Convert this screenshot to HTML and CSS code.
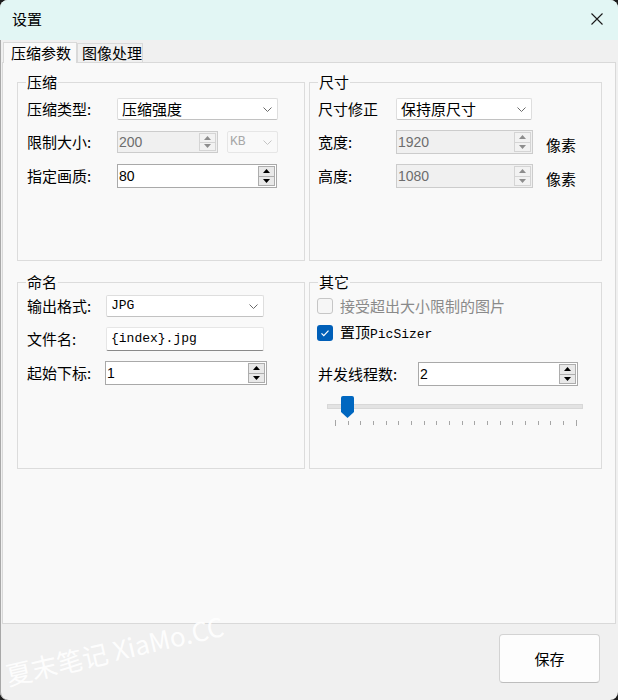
FILE: index.html
```html
<!DOCTYPE html>
<html lang="zh-CN">
<head>
<meta charset="utf-8">
<title>设置</title>
<link rel="stylesheet" href="styles.css">
</head>
<body>
<div class="window">
  <div class="titlebar">
    <span class="title">设置</span>
    <svg class="close" width="12" height="12" viewBox="0 0 12 12"><path d="M0.5 0.5L11.5 11.5M11.5 0.5L0.5 11.5" stroke="#1a1a1a" stroke-width="1.1" fill="none"/></svg>
  </div>
  <div class="tabs">
    <div class="tab active">压缩参数</div>
    <div class="tab">图像处理</div>
  </div>
  <div class="page">
    <fieldset class="group g1">
      <legend>压缩</legend>
      <div class="rows">
        <div class="row h22">
          <span class="lbl w90">压缩类型:</span>
          <div class="combo w161"><span>压缩强度</span><svg class="chev" width="9" height="5" viewBox="0 0 9 5"><path d="M0.5 0.5L4.5 4.5L8.5 0.5" fill="none" stroke="#6a6a6a"/></svg></div>
        </div>
        <div class="row h22">
          <span class="lbl w90">限制大小:</span>
          <div class="spin disabled w101"><span class="num">200</span>
            <div class="sbtns"><div class="sb"><svg width="7" height="4" viewBox="0 0 7 4"><path d="M0 4L3.5 0L7 4Z"/></svg></div><div class="sb"><svg width="7" height="4" viewBox="0 0 7 4"><path d="M0 0L3.5 4L7 0Z"/></svg></div></div>
          </div>
          <div class="combo disabled w51 ml9"><span class="mono">KB</span><svg class="chev" width="9" height="5" viewBox="0 0 9 5"><path d="M0.5 0.5L4.5 4.5L8.5 0.5" fill="none" stroke="#c4c4c4"/></svg></div>
        </div>
        <div class="row h24">
          <span class="lbl w90">指定画质:</span>
          <div class="spin w160"><span class="num">80</span>
            <div class="sbtns"><div class="sb"><svg width="7" height="4" viewBox="0 0 7 4"><path d="M0 4L3.5 0L7 4Z"/></svg></div><div class="sb"><svg width="7" height="4" viewBox="0 0 7 4"><path d="M0 0L3.5 4L7 0Z"/></svg></div></div>
          </div>
        </div>
      </div>
    </fieldset>

    <fieldset class="group g2">
      <legend>尺寸</legend>
      <div class="rows">
        <div class="row h22">
          <span class="lbl w78">尺寸修正</span>
          <div class="combo w136"><span>保持原尺寸</span><svg class="chev" width="9" height="5" viewBox="0 0 9 5"><path d="M0.5 0.5L4.5 4.5L8.5 0.5" fill="none" stroke="#6a6a6a"/></svg></div>
        </div>
        <div class="row h24">
          <span class="lbl w78">宽度:</span>
          <div class="spin disabled w137"><span class="num">1920</span>
            <div class="sbtns"><div class="sb"><svg width="7" height="4" viewBox="0 0 7 4"><path d="M0 4L3.5 0L7 4Z"/></svg></div><div class="sb"><svg width="7" height="4" viewBox="0 0 7 4"><path d="M0 0L3.5 4L7 0Z"/></svg></div></div>
          </div>
          <span class="unit">像素</span>
        </div>
        <div class="row h24">
          <span class="lbl w78">高度:</span>
          <div class="spin disabled w137"><span class="num">1080</span>
            <div class="sbtns"><div class="sb"><svg width="7" height="4" viewBox="0 0 7 4"><path d="M0 4L3.5 0L7 4Z"/></svg></div><div class="sb"><svg width="7" height="4" viewBox="0 0 7 4"><path d="M0 0L3.5 4L7 0Z"/></svg></div></div>
          </div>
          <span class="unit">像素</span>
        </div>
      </div>
    </fieldset>

    <fieldset class="group g3">
      <legend>命名</legend>
      <div class="rows">
        <div class="row h22">
          <span class="lbl w79">输出格式:</span>
          <div class="combo w158"><span class="mono">JPG</span><svg class="chev" width="9" height="5" viewBox="0 0 9 5"><path d="M0.5 0.5L4.5 4.5L8.5 0.5" fill="none" stroke="#6a6a6a"/></svg></div>
        </div>
        <div class="row h24">
          <span class="lbl w79">文件名:</span>
          <div class="textbox w158"><span class="mono">{index}.jpg</span></div>
        </div>
        <div class="row h24">
          <span class="lbl w78">起始下标:</span>
          <div class="spin w162"><span class="num">1</span>
            <div class="sbtns"><div class="sb"><svg width="7" height="4" viewBox="0 0 7 4"><path d="M0 4L3.5 0L7 4Z"/></svg></div><div class="sb"><svg width="7" height="4" viewBox="0 0 7 4"><path d="M0 0L3.5 4L7 0Z"/></svg></div></div>
          </div>
        </div>
      </div>
    </fieldset>

    <fieldset class="group g4">
      <legend>其它</legend>
      <div class="rows4">
        <div class="check disabled"><span class="box"></span><span class="clabel">接受超出大小限制的图片</span></div>
        <div class="check on"><span class="box"><svg width="16" height="16" viewBox="0 0 16 16"><path d="M4.5 8.3L6.8 10.6L11.5 5.6" fill="none" stroke="#fff" stroke-width="1.2"/></svg></span><span class="clabel">置顶<span class="mono">PicSizer</span></span></div>
        <div class="row h24 threads">
          <span class="lbl w100">并发线程数:</span>
          <div class="spin w160"><span class="num">2</span>
            <div class="sbtns"><div class="sb"><svg width="7" height="4" viewBox="0 0 7 4"><path d="M0 4L3.5 0L7 4Z"/></svg></div><div class="sb"><svg width="7" height="4" viewBox="0 0 7 4"><path d="M0 0L3.5 4L7 0Z"/></svg></div></div>
          </div>
        </div>
        <div class="slider">
          <div class="track"></div>
          <svg class="thumb" width="13" height="22" viewBox="0 0 13 22"><path d="M2 0H11Q13 0 13 2V16L6.5 22L0 16V2Q0 0 2 0Z" fill="#0067c0"/></svg>
          <div class="ticks">
            <i class="long"></i><i></i><i></i><i></i><i></i><i></i><i></i><i></i><i></i><i></i><i></i><i></i><i></i><i></i><i></i><i></i><i></i><i></i><i></i><i class="long"></i>
          </div>
        </div>
      </div>
    </fieldset>
  </div>
  <div class="footer">
    <button class="save">保存</button>
  </div>
  <div class="watermark">夏末笔记 XiaMo.CC</div>
</div>
</body>
</html>
```

FILE: styles.css
```css
* { box-sizing: border-box; }
html, body { margin: 0; padding: 0; }
body {
  width: 618px;
  height: 700px;
  overflow: hidden;
  background: #1c1c1c;
  font-family: "Noto Sans CJK SC", "Noto Sans", sans-serif;
  font-size: 15px;
  line-height: 16px;
  color: #000;
}
.window {
  width: 618px;
  height: 700px;
  background: #f0f0f0;
  border-radius: 8px;
  overflow: hidden;
  display: flex;
  flex-direction: column;
  position: relative;
  box-shadow: inset 1px 0 0 #a8a8a8;
}
.titlebar {
  height: 40px;
  flex: none;
  background: #e2f6f4;
  display: flex;
  align-items: center;
  justify-content: space-between;
  padding: 0 15px 0 12px;
}
.title { padding-bottom: 2px; }
.close { display: block; margin-top: -2px; }

.tabs {
  height: 22px;
  flex: none;
  display: flex;
  align-items: flex-end;
  padding-left: 3px;
}
.tab {
  height: 19px;
  width: 66px;
  border: 1px solid #d9d9d9;
  border-bottom: none;
  background: #f0f0f0;
  padding-left: 4px;
  line-height: 17px;
  font-size: 15px;
}
.tab.active {
  position: relative;
  z-index: 1;
  width: 74px;
  height: 21px;
  margin-bottom: -1px;
  background: #f9f9f9;
  padding-left: 7px;
  line-height: 19px;
}

.page {
  flex: none;
  margin: 0 2px;
  height: 562px;
  background: #f9f9f9;
  border: 1px solid #d9d9d9;
  padding: 11px 0 0 14px;
  display: grid;
  grid-template-columns: 288px 293px;
  grid-template-rows: 187px 195px;
  column-gap: 4px;
  row-gap: 13px;
}
.group {
  margin: 0;
  padding: 0;
  min-width: 0;
  border: 1px solid #dcdcdc;
}
.group legend {
  margin-left: 8px;
  padding: 0 1px;
  line-height: 16px;
  font-size: 15px;
}
.g1 .rows { padding: 8px 0 0 9px; }
.g2 .rows { padding: 8px 0 0 8px; }
.g3 .rows { padding: 5px 0 0 9px; }
.rows { display: flex; flex-direction: column; gap: 10px; }
.g1 .rows { gap: 11px; }
.row { display: flex; align-items: center; }
.h22 { height: 22px; }
.h24 { height: 24px; }
.lbl { flex: none; white-space: nowrap; }
.w90 { width: 90px; }
.w78 { width: 78px; }
.w79 { width: 79px; }
.w100 { width: 100px; }
.w161 { width: 161px; }
.w160 { width: 160px; }
.w162 { width: 162px; }
.w101 { width: 101px; }
.w51 { width: 51px; }
.w136 { width: 136px; }
.w137 { width: 137px; }
.w158 { width: 158px; }
.ml9 { margin-left: 9px; }

.mono { font-family: "Liberation Mono", monospace; font-size: 13px; }
.num { font-family: "Liberation Sans", sans-serif; font-size: 14px; }

.combo {
  height: 100%;
  flex: none;
  background: #fff;
  border: 1px solid #dedede;
  border-bottom-color: #c2c2c2;
  border-radius: 2px;
  display: flex;
  align-items: center;
  justify-content: space-between;
  padding: 0 5px 0 4px;
}
.combo.disabled {
  background: #f9f9f9;
  border-color: #e6e6e6;
  color: #a8a8a8;
  padding-left: 2px;
}
.chev { display: block; }

.spin {
  height: 100%;
  flex: none;
  background: #fff;
  border: 1px solid #a9a9a9;
  display: flex;
  align-items: center;
  padding-left: 1px;
}
.spin.disabled {
  background: #f0f0f0;
  border-color: #cccccc;
  color: #6d6d6d;
}
.sbtns {
  margin: 1px 1px 1px auto;
  align-self: stretch;
  display: flex;
  flex-direction: column;
  width: 17px;
}
.sb {
  flex: 1;
  border: 1px solid #adadad;
  background: #e9e9e9;
  display: flex;
  align-items: center;
  justify-content: center;
}
.sb + .sb { border-top: none; }
.sb svg { display: block; fill: #000; }
.spin.disabled .sb { border-color: #d4d4d4; background: #f2f2f2; }
.spin.disabled .sb svg { fill: #8d8d8d; }

.textbox {
  height: 100%;
  flex: none;
  background: #fff;
  border: 1px solid #e6e6e6;
  border-bottom-color: #8a8a8a;
  border-radius: 2px;
  display: flex;
  align-items: center;
  padding-left: 4px;
}

.unit { margin-left: 13px; padding-top: 6px; }

.rows4 { padding: 8px 0 0 7px; display: flex; flex-direction: column; }
.check { display: flex; align-items: center; height: 16px; }
.check + .check { margin-top: 11px; }
.check .box {
  width: 16px;
  height: 16px;
  flex: none;
  border-radius: 3px;
  margin-right: 7px;
}
.check.disabled .box { border: 1px solid #c6c6c6; background: #f6f6f6; }
.check.disabled .clabel { color: #8a8a8a; }
.check.on .box { background: #005fb8; }
.check .box svg { display: block; }
.threads { margin-top: 21px; padding-left: 1px; }

.slider {
  position: relative;
  margin: 18px 0 0 10px;
  width: 256px;
}
.track {
  height: 5px;
  background: #e3e3e3;
  border: 1px solid #d8d8d8;
}
.thumb {
  position: absolute;
  left: 14px;
  top: -8px;
  display: block;
}
.ticks {
  margin: 11px 0 0 8px;
  width: 242px;
  display: flex;
  justify-content: space-between;
  align-items: flex-start;
}
.ticks i { display: block; width: 1px; height: 4px; background: #a6a6a6; margin-top: 1px; }
.ticks i.long { height: 6px; margin-top: 0; }

.footer {
  flex: 1;
  display: flex;
  justify-content: flex-end;
  align-items: flex-start;
  padding: 10px 18px 0 0;
}
.save {
  width: 101px;
  height: 49px;
  background: #fdfdfd;
  border: 1px solid #d3d3d3;
  border-bottom-color: #bdbdbd;
  border-radius: 4px;
  font-family: "Noto Sans CJK SC", sans-serif;
  font-size: 15px;
  color: #000;
  padding: 0;
}

.watermark {
  position: absolute;
  left: 6px;
  top: 659px;
  height: 32px;
  line-height: 32px;
  font-family: "Noto Sans CJK SC", "Noto Sans", sans-serif;
  font-size: 26px;
  color: rgba(255, 255, 255, 0.92);
  white-space: nowrap;
  transform: rotate(-13deg);
  transform-origin: 0 50%;
  pointer-events: none;
}
```
